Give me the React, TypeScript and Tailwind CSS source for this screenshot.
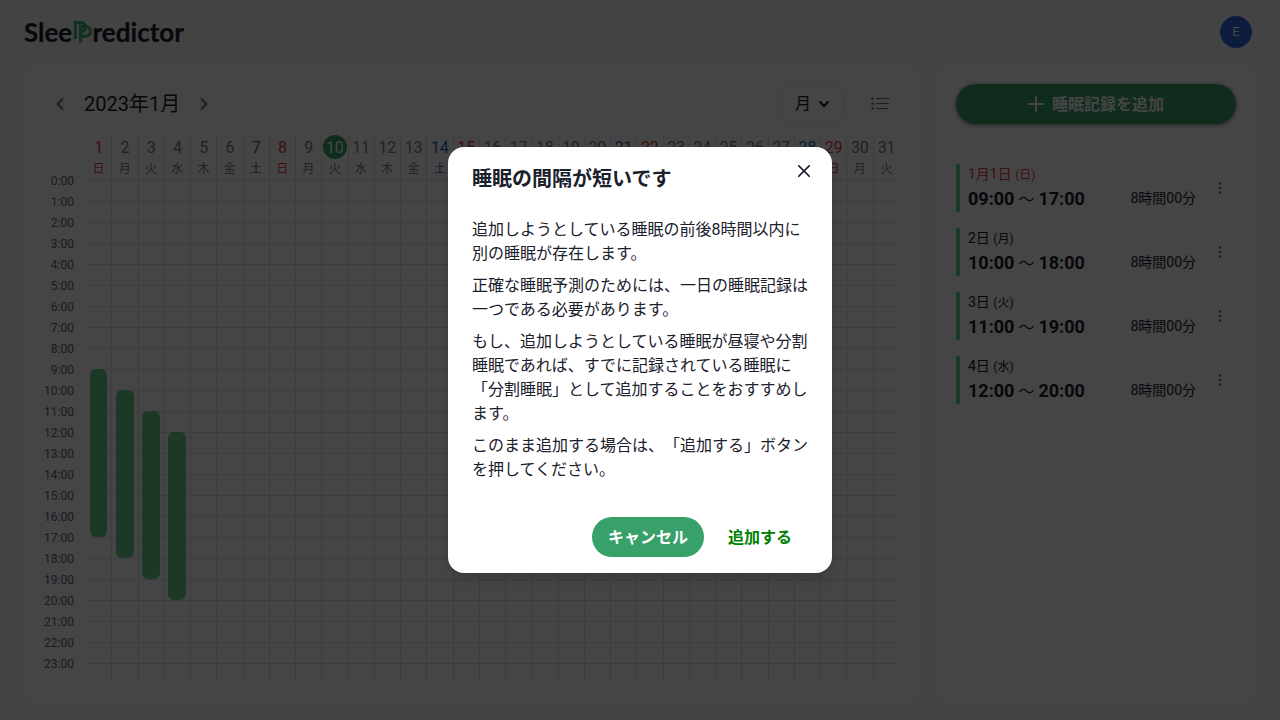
import React from "react";

const WEEK = ["日", "月", "火", "水", "木", "金", "土"];
const days = Array.from({ length: 31 }, (_, i) => i + 1);
const hours = Array.from({ length: 24 }, (_, i) => i);
const sleeps = [
  { label: "1月1日", week: "日", from: "09:00", to: "17:00", start: 9 },
  { label: "2日", week: "月", from: "10:00", to: "18:00", start: 10 },
  { label: "3日", week: "火", from: "11:00", to: "19:00", start: 11 },
  { label: "4日", week: "水", from: "12:00", to: "20:00", start: 12 },
];

function Logo() {
  return (
    <svg width="162" height="32" viewBox="0 0 162 32" className="block">
      <g fontFamily="Lato" fontWeight="700" fontSize="26" fill="#1A202C" stroke="#1A202C" strokeWidth="0.2">
        <text x="0" y="26.2" textLength="48" lengthAdjust="spacingAndGlyphs">Slee</text>
        <text x="68.5" y="26.2" textLength="91.5" lengthAdjust="spacingAndGlyphs">redictor</text>
      </g>
      <g fill="none" stroke="#40B072" strokeWidth="3.2">
        <path d="M51.300 23V6.700h6a4.400 4.400 0 0 1 4.200 5.400 4.400 4.400 0 0 1-4.200 3.400" />
        <path d="M56.500 27V10.700h5.300a4.700 4.700 0 0 1 0 9.400h-5.300" />
      </g>
    </svg>
  );
}

function Header() {
  return (
    <header className="flex h-16 items-center justify-between pl-6 pr-7">
      <Logo />
      <div className="flex size-8 items-center justify-center rounded-full bg-[#3366e0] text-[13px] text-white">E</div>
    </header>
  );
}

function dayColor(day: number) {
  const w = (day - 1) % 7;
  return w === 0 ? "text-[#E53E3E]" : w === 6 ? "text-[#2B6CB0]" : "text-[#718096]";
}

function Chart() {
  return (
    <div className="flex">
      <div className="w-[34px] shrink-0 pt-[39px] text-right text-xs text-[#5b677b]">
        {hours.map((h) => (
          <div key={h} className="h-[21px] leading-[21px]">
            {h}:00
          </div>
        ))}
      </div>
      <div className="ml-3 grid h-[552px] w-[814px] shrink-0 grid-cols-[repeat(31,26.258px)] bg-[repeating-linear-gradient(to_bottom,#DEE2EE_0,#DEE2EE_1px,transparent_1px,transparent_21px)] bg-no-repeat bg-[length:814px_484px] bg-[position:0_48px]">
        {days.map((d) => {
          const s = sleeps[d - 1];
          return (
            <div key={d} className={"flex flex-col items-center " + (d < 31 ? "border-r border-[#DEE2EE] " : "") + dayColor(d)}>
              <div
                className={
                  "mt-[3px] flex size-6 shrink-0 items-center justify-center rounded-full pt-0.5 text-base " +
                  (d === 10 ? "bg-[#38A169] text-white" : "")
                }
              >
                {d}
              </div>
              <div className="h-[21px] text-xs leading-[21px]">{WEEK[(d - 1) % 7]}</div>
              {s && (
                <div
                  className="ml-[3.6px] h-[168px] w-[17.75px] shrink-0 self-start rounded-md bg-[#68D391]"
                  style={{ marginTop: s.start * 21 }}
                />
              )}
            </div>
          );
        })}
      </div>
    </div>
  );
}

function Calendar() {
  return (
    <section className="h-[640px] w-[896px] rounded-2xl bg-white px-4 pt-5">
      <div className="flex h-10 items-center">
        <svg width="40" height="40" viewBox="0 0 40 40" fill="none" stroke="#5f6d84" strokeWidth="2" strokeLinecap="round" strokeLinejoin="round">
          <path d="M22.500 15 17.500 20l5 5" />
        </svg>
        <h1 className="ml-1 w-[96px] whitespace-nowrap text-xl">2023年1月</h1>
        <svg width="40" height="40" viewBox="0 0 40 40" fill="none" stroke="#5f6d84" strokeWidth="2" strokeLinecap="round" strokeLinejoin="round">
          <path d="m21.500 15 5 5-5 5" />
        </svg>
        <button className="ml-auto flex h-10 w-[66px] items-center rounded-2xl border border-[#E2E8F0] pl-4">
          月
          <svg width="12" height="12" viewBox="0 0 12 12" className="ml-[7px]" fill="none" stroke="#1A202C" strokeWidth="2.2">
            <path d="m1.500 3.500 4.500 4.500 4.500-4.500" />
          </svg>
        </button>
        <svg width="40" height="40" viewBox="0 0 40 40" className="ml-4 mr-1" fill="none" stroke="#5f6d84" strokeLinecap="round">
          <path strokeWidth="1.2" d="M16.500 14.500h11.800M16.500 19.500h11.800M16.500 24.500h11.800" />
          <path strokeWidth="2.500" d="M12.500 14.500h.01M12.500 19.500h.01M12.500 24.500h.01" />
        </svg>
      </div>
      <div className="pt-2">
        <Chart />
      </div>
    </section>
  );
}

function Records() {
  return (
    <section className="h-[640px] w-80 rounded-2xl bg-white p-5">
      <button className="flex h-10 w-full items-center justify-center gap-2 rounded-full bg-[#38A169] font-bold text-white shadow-[0_1px_4px_rgba(0,0,0,0.5)]">
        <svg width="16" height="16" viewBox="0 0 16 16" stroke="currentColor" strokeWidth="1.8">
          <path d="M8 0v16M0 8h16" />
        </svg>
        <span className="pt-0.5">睡眠記録を追加</span>
      </button>
      <ul className="mt-10 flex flex-col gap-4">
        {sleeps.map((s) => (
          <li key={s.from} className="flex h-12">
            <div className="w-1 rounded-full bg-[#68D391]" />
            <div className="ml-2 w-[228px]">
              <div className={"h-5 text-sm leading-5 " + (s.week === "日" ? "text-[#E53E3E]" : "")}>
                {s.label} <span className="text-xs">({s.week})</span>
              </div>
              <div className="flex h-7 items-center justify-between">
                <div className="pt-0.5 text-lg leading-7">
                  <b>{s.from}</b>
                  <span className="mx-1 text-base">〜</span>
                  <b>{s.to}</b>
                </div>
                <span className="text-sm">8時間00分</span>
              </div>
            </div>
            <svg width="16" height="16" viewBox="0 0 16 16" className="ml-4 mt-4" fill="#5f6d84">
              <circle cx="8" cy="3.500" r="1.300" />
              <circle cx="8" cy="8" r="1.300" />
              <circle cx="8" cy="12.500" r="1.300" />
            </svg>
          </li>
        ))}
      </ul>
    </section>
  );
}

function Dialog() {
  return (
    <div
      role="dialog"
      className="relative h-[426px] w-96 rounded-2xl bg-white shadow-[0_10px_15px_-3px_rgba(0,0,0,0.1),0_4px_6px_-2px_rgba(0,0,0,0.05)] [text-spacing-trim:space-all]"
    >
      <h2 className="px-6 pt-[17px] text-xl font-bold leading-[30px]">睡眠の間隔が短いです</h2>
      <button className="absolute right-3 top-2 flex size-8 items-center justify-center" aria-label="閉じる">
        <svg width="12" height="12" viewBox="0 0 12 12" stroke="#1A202C" strokeWidth="1.500" strokeLinecap="round">
          <path d="m.6.6 10.800 10.800M11.400.6.6 11.400" />
        </svg>
      </button>
      <div className="flex flex-col gap-2 px-6 pt-6 leading-6">
        <p>追加しようとしている睡眠の前後8時間以内に別の睡眠が存在します。</p>
        <p>正確な睡眠予測のためには、一日の睡眠記録は一つである必要があります。</p>
        <p>もし、追加しようとしている睡眠が昼寝や分割睡眠であれば、すでに記録されている睡眠に「分割睡眠」として追加することをおすすめします。</p>
        <p>このまま追加する場合は、「追加する」ボタンを押してください。</p>
      </div>
      <div className="flex justify-end gap-2 px-6 pt-[35px] font-bold">
        <button className="h-10 rounded-full bg-[#38A169] px-4 pt-0.5 text-white">キャンセル</button>
        <button className="h-10 px-4 pt-0.5 text-[#008000]">追加する</button>
      </div>
    </div>
  );
}

export default function App() {
  return (
    <div lang="ja" className="relative h-[720px] w-[1280px] overflow-hidden bg-[#F7F7F7] font-[Roboto,'Noto_Sans_CJK_JP',sans-serif] text-base text-[#1A202C]">
      <Header />
      <main className="flex gap-4 px-6">
        <Calendar />
        <Records />
      </main>
      <div className="absolute inset-0 flex items-center justify-center bg-black/[0.73]">
        <Dialog />
      </div>
    </div>
  );
}
